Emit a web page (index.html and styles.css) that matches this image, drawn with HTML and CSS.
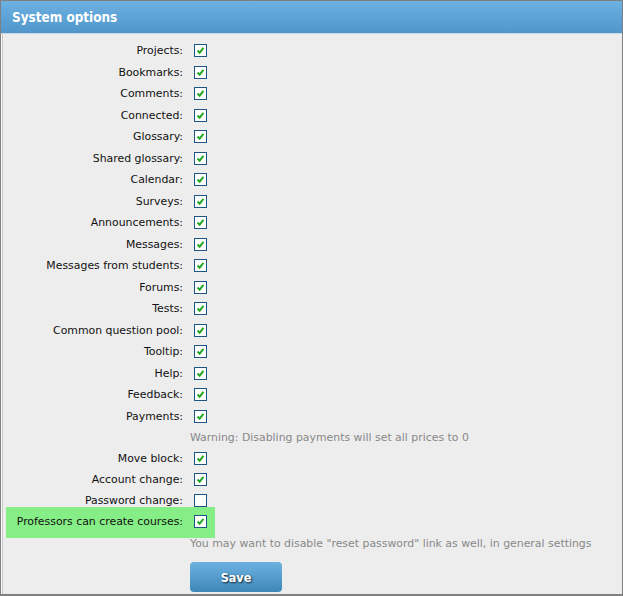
FILE: index.html
```html
<!DOCTYPE html>
<html>
<head>
<meta charset="utf-8">
<link rel="stylesheet" href="styles.css">
</head>
<body>
<div class="panel">
  <div class="header">System options</div>
  <form class="body">
    <div class="group modules">
      <div class="row"><span class="lbl">Projects:</span><span class="cb on"><svg viewBox="0 0 13 13"><path d="M3 6.5 L5.5 9 L10 3.5"/></svg></span></div>
      <div class="row"><span class="lbl">Bookmarks:</span><span class="cb on"><svg viewBox="0 0 13 13"><path d="M3 6.5 L5.5 9 L10 3.5"/></svg></span></div>
      <div class="row"><span class="lbl">Comments:</span><span class="cb on"><svg viewBox="0 0 13 13"><path d="M3 6.5 L5.5 9 L10 3.5"/></svg></span></div>
      <div class="row"><span class="lbl">Connected:</span><span class="cb on"><svg viewBox="0 0 13 13"><path d="M3 6.5 L5.5 9 L10 3.5"/></svg></span></div>
      <div class="row"><span class="lbl">Glossary:</span><span class="cb on"><svg viewBox="0 0 13 13"><path d="M3 6.5 L5.5 9 L10 3.5"/></svg></span></div>
      <div class="row"><span class="lbl">Shared glossary:</span><span class="cb on"><svg viewBox="0 0 13 13"><path d="M3 6.5 L5.5 9 L10 3.5"/></svg></span></div>
      <div class="row"><span class="lbl">Calendar:</span><span class="cb on"><svg viewBox="0 0 13 13"><path d="M3 6.5 L5.5 9 L10 3.5"/></svg></span></div>
      <div class="row"><span class="lbl">Surveys:</span><span class="cb on"><svg viewBox="0 0 13 13"><path d="M3 6.5 L5.5 9 L10 3.5"/></svg></span></div>
      <div class="row"><span class="lbl">Announcements:</span><span class="cb on"><svg viewBox="0 0 13 13"><path d="M3 6.5 L5.5 9 L10 3.5"/></svg></span></div>
      <div class="row"><span class="lbl">Messages:</span><span class="cb on"><svg viewBox="0 0 13 13"><path d="M3 6.5 L5.5 9 L10 3.5"/></svg></span></div>
      <div class="row"><span class="lbl">Messages from students:</span><span class="cb on"><svg viewBox="0 0 13 13"><path d="M3 6.5 L5.5 9 L10 3.5"/></svg></span></div>
      <div class="row"><span class="lbl">Forums:</span><span class="cb on"><svg viewBox="0 0 13 13"><path d="M3 6.5 L5.5 9 L10 3.5"/></svg></span></div>
      <div class="row"><span class="lbl">Tests:</span><span class="cb on"><svg viewBox="0 0 13 13"><path d="M3 6.5 L5.5 9 L10 3.5"/></svg></span></div>
      <div class="row"><span class="lbl">Common question pool:</span><span class="cb on"><svg viewBox="0 0 13 13"><path d="M3 6.5 L5.5 9 L10 3.5"/></svg></span></div>
      <div class="row"><span class="lbl">Tooltip:</span><span class="cb on"><svg viewBox="0 0 13 13"><path d="M3 6.5 L5.5 9 L10 3.5"/></svg></span></div>
      <div class="row"><span class="lbl">Help:</span><span class="cb on"><svg viewBox="0 0 13 13"><path d="M3 6.5 L5.5 9 L10 3.5"/></svg></span></div>
      <div class="row"><span class="lbl">Feedback:</span><span class="cb on"><svg viewBox="0 0 13 13"><path d="M3 6.5 L5.5 9 L10 3.5"/></svg></span></div>
      <div class="row"><span class="lbl">Payments:</span><span class="cb on"><svg viewBox="0 0 13 13"><path d="M3 6.5 L5.5 9 L10 3.5"/></svg></span></div>
    </div>
    <div class="group account">
      <div class="row"><span class="lbl"></span><span class="note">Warning: Disabling payments will set all prices to 0</span></div>
      <div class="row"><span class="lbl">Move block:</span><span class="cb on"><svg viewBox="0 0 13 13"><path d="M3 6.5 L5.5 9 L10 3.5"/></svg></span></div>
      <div class="row"><span class="lbl">Account change:</span><span class="cb on"><svg viewBox="0 0 13 13"><path d="M3 6.5 L5.5 9 L10 3.5"/></svg></span></div>
      <div class="row"><span class="lbl">Password change:</span><span class="cb"></span></div>
      <div class="row hl"><span class="lbl">Professors can create courses:</span><span class="cb on"><svg viewBox="0 0 13 13"><path d="M3 6.5 L5.5 9 L10 3.5"/></svg></span></div>
      <div class="row after-hl"><span class="lbl"></span><span class="note">You may want to disable "reset password" link as well, in general settings</span></div>
    </div>
    <div class="actions"><button type="button" class="save">Save</button></div>
  </form>
</div>
</body>
</html>
```
FILE: styles.css
```css
html, body {
  margin: 0;
  padding: 0;
  background: #ededed;
}
.panel {
  width: 623px;
  height: 596px;
  box-sizing: border-box;
  border: 1px solid #808080;
  border-bottom-width: 2px;
  background: #ededed;
  box-shadow: inset 1px 0 0 #fafafa, inset 2px 0 0 #c8c8c8;
  font-family: "DejaVu Sans", sans-serif;
  font-size: 10.9px;
  color: #111;
  isolation: isolate;
}
.header {
  height: 32px;
  background: linear-gradient(#6db1e3, #5096ca);
  border-bottom: 1px solid #cdd7e0;
  color: #fff;
  font-family: "DejaVu Sans Condensed", "DejaVu Sans", sans-serif;
  font-weight: bold;
  font-size: 13.4px;
  line-height: 33px;
  padding-left: 11px;
}
.body {
  margin: 0;
  padding-top: 6px;
}
.row {
  display: flex;
  align-items: center;
  height: 21.5px;
  position: relative;
}
.account .row {
  height: 21px;
}
.account .after-hl {
  margin-top: 1px;
}
.lbl {
  width: 182px;
  flex: none;
  text-align: right;
  white-space: nowrap;
  padding-right: 11px;
  box-sizing: content-box;
}
.cb {
  width: 11px;
  height: 11px;
  border: 1px solid #1d5587;
  background: #fff;
  flex: none;
  display: block;
}
.cb svg {
  display: block;
  width: 11px;
  height: 11px;
  margin: 0;
}
.cb svg path {
  fill: none;
  stroke: #22a822;
  stroke-width: 2.4;
}
.note {
  color: #888;
  margin-left: -4px;
}
.hl::before {
  content: "";
  position: absolute;
  left: 5px;
  top: -4px;
  bottom: -6px;
  width: 209px;
  background: #86ee86;
  z-index: -1;
}
.actions {
  padding: 8px 0 0 189px;
}
.save {
  width: 92px;
  height: 30px;
  border: none;
  border-radius: 4px;
  background: linear-gradient(#6eb1e1, #3d88b8);
  color: #fff;
  font-family: "DejaVu Sans Condensed", "DejaVu Sans", sans-serif;
  font-weight: bold;
  font-size: 12.5px;
  text-shadow: 1px 1px 2px #123;
  padding: 0;
}
```
